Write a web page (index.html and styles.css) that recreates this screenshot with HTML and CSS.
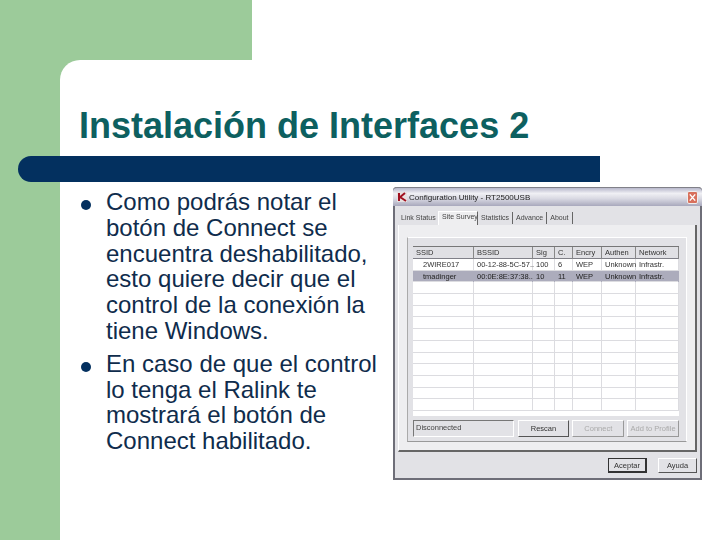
FILE: index.html
```html
<!DOCTYPE html>
<html lang="es">
<head>
<meta charset="utf-8">
<title>Instalación de Interfaces 2</title>
<link rel="stylesheet" href="styles.css">
</head>
<body>
<div class="slide">
  <div class="panel">
    <h1 class="title">Instalación de Interfaces 2</h1>
    <div class="bar"></div>
    <div class="content">
      <ul class="points">
        <li>Como podrás notar el botón de Connect se encuentra deshabilitado, esto quiere decir que el control de la conexión la tiene Windows.</li>
        <li>En caso de que el control lo tenga el Ralink te mostrará el botón de Connect habilitado.</li>
      </ul>
      <div class="dialog">
        <div class="titlebar">
          <svg class="appicon" viewBox="0 0 10 10"><rect width="10" height="10" fill="#e8e0e0"/><path d="M2 1v8M2 6l6-5M3 5l6 4" stroke="#a01020" stroke-width="2" fill="none"/></svg>
          <span class="apptitle">Configuration Utility - RT2500USB</span>
          <span class="close"><svg viewBox="0 0 10 12"><path d="M2 2.5l6 7M8 2.5l-6 7" stroke="#fff" stroke-width="1.6"/></svg></span>
        </div>
        <div class="tabs">
          <span class="tab first">Link Status</span>
          <span class="tab active">Site Survey</span>
          <span class="tab">Statistics</span>
          <span class="tab">Advance</span>
          <span class="tab">About</span>
        </div>
        <div class="tabpage">
          <div class="group">
            <div class="grid">
              <div class="row head"><span>SSID</span><span>BSSID</span><span>Sig</span><span>C.</span><span>Encry</span><span>Authen</span><span>Network</span></div>
              <div class="row"><span class="ind">2WIRE017</span><span>00-12-88-5C-57..</span><span>100</span><span>6</span><span>WEP</span><span>Unknown</span><span>Infrastr.</span></div>
              <div class="row sel"><span class="ind">tmadinger</span><span>00:0E:8E:37:38..</span><span>10</span><span>11</span><span>WEP</span><span>Unknown</span><span>Infrastr.</span></div>
              <div class="row"><span></span><span></span><span></span><span></span><span></span><span></span><span></span></div>
              <div class="row"><span></span><span></span><span></span><span></span><span></span><span></span><span></span></div>
              <div class="row"><span></span><span></span><span></span><span></span><span></span><span></span><span></span></div>
              <div class="row"><span></span><span></span><span></span><span></span><span></span><span></span><span></span></div>
              <div class="row"><span></span><span></span><span></span><span></span><span></span><span></span><span></span></div>
              <div class="row"><span></span><span></span><span></span><span></span><span></span><span></span><span></span></div>
              <div class="row"><span></span><span></span><span></span><span></span><span></span><span></span><span></span></div>
              <div class="row"><span></span><span></span><span></span><span></span><span></span><span></span><span></span></div>
              <div class="row"><span></span><span></span><span></span><span></span><span></span><span></span><span></span></div>
              <div class="row"><span></span><span></span><span></span><span></span><span></span><span></span><span></span></div>
              <div class="row tail"><span></span><span></span><span></span><span></span><span></span><span></span><span></span></div>
            </div>
            <div class="actions">
              <div class="status">Disconnected</div>
              <button class="btn">Rescan</button>
              <button class="btn off">Connect</button>
              <button class="btn off">Add to Profile</button>
            </div>
          </div>
        </div>
        <div class="footer">
          <button class="btn small primary">Aceptar</button>
          <button class="btn small">Ayuda</button>
        </div>
      </div>
    </div>
  </div>
</div>
</body>
</html>
```
FILE: styles.css
```css
* { box-sizing: border-box; }
html, body { margin: 0; padding: 0; }
.slide {
  width: 720px;
  height: 540px;
  overflow: hidden;
  padding: 60px 0 0 60px;
  background-color: #fff;
  background-image: linear-gradient(#9ccb9a, #9ccb9a), linear-gradient(#9ccb9a, #9ccb9a), linear-gradient(#9ccb9a, #9ccb9a);
  background-size: 60px 100%, 252px 60px, 90px 90px;
  background-repeat: no-repeat;
  font-family: "Liberation Sans", Arial, sans-serif;
}
.panel {
  height: 480px;
  background: #fff;
  border-top-left-radius: 20px;
  padding-top: 46px;
}
.title {
  margin: 0 0 0 19px;
  height: 50px;
  font-size: 36px;
  line-height: 40px;
  font-weight: 700;
  color: #0d6060;
}
.bar {
  width: 582px;
  height: 26px;
  margin-left: -42px;
  background: #03305f;
  border-radius: 13px 0 0 13px;
}
.content {
  display: flex;
  align-items: flex-start;
}
.points {
  list-style: none;
  margin: 7px 0 0;
  padding: 0 0 0 46px;
  width: 333px;
  flex: none;
  font-size: 24px;
  line-height: 25.8px;
  color: #0f2c4c;
}
.points li { position: relative; }
.points li + li { margin-top: 7px; }
.points li::before {
  content: "";
  position: absolute;
  left: -25px;
  top: 11px;
  width: 10px;
  height: 10px;
  border-radius: 50%;
  background: #03305f;
}
.dialog {
  width: 309px;
  height: 293px;
  margin-top: 5px;
  background: #e2e2e6;
  border: 2px solid #6e6e78;
  border-top: 0;
  border-radius: 4px 4px 0 0;
  font-size: 7.5px;
  color: #444;
  display: flex;
  flex-direction: column;
  filter: blur(0.4px);
}
.titlebar {
  height: 19px;
  flex: none;
  margin: 0 -2px;
  display: flex;
  align-items: center;
  gap: 2px;
  padding: 0 4px 0 4px;
  border-radius: 4px 4px 0 0;
  border-top: 1px solid #808088;
  background: linear-gradient(#b8b8cc, #f0f0f4 30%, #d8d8e2 60%, #a8a8bc);
}
.appicon { width: 10px; height: 10px; flex: none; }
.apptitle { font-size: 8px; color: #222; flex: 1; white-space: nowrap; }
.close {
  width: 11px;
  height: 13px;
  flex: none;
  background: #d8705c;
  border: 1px solid #eee;
  border-radius: 2px;
  display: flex;
}
.close svg { width: 100%; height: 100%; }
.tabs {
  height: 19px;
  flex: none;
  display: flex;
  align-items: flex-end;
  padding-left: 4px;
  font-size: 7px;
}
.tab {
  height: 12px;
  line-height: 11px;
  padding: 0 3px;
  border-right: 1px solid #666;
  white-space: nowrap;
  margin-bottom: 1px;
}
.tab.first { width: 39px; padding: 0 0 0 2px; border-right: 0; }
.tab.active {
  height: 14px;
  width: 40px;
  padding: 0 0 0 3px;
  margin-bottom: 0;
  line-height: 10px;
  background: #eeeef0;
  border-left: 1px solid #fff;
  border-top: 1px solid #fff;
}
.tabpage {
  height: 227px;
  flex: none;
  margin: 0 3px;
  padding: 12px 8px 0 8px;
  background: #eeeef0;
  border-right: 2px solid #666;
  border-bottom: 2px solid #666;
  border-left: 1px solid #fff;
}
.group {
  height: 205px;
  padding: 8px 7px 0 5px;
  background: #e2e2e6;
  border: 1px solid #fff;
  border-left-color: #aaa;
  border-bottom-color: #999;
}
.grid {
  height: 170px;
  background: #fff;
  overflow: hidden;
}
.row {
  display: grid;
  grid-template-columns: 61px 59px 22px 18px 29px 34px 1fr;
  height: 11.7px;
  line-height: 11px;
  border-bottom: 1px solid #dcdce0;
  white-space: nowrap;
  color: #333;
}
.row span {
  border-right: 1px solid #dcdce0;
  padding-left: 3px;
  height: 100%;
  min-width: 0;
}
.row .ind { padding-left: 10px; }
.row.head {
  height: 13px;
  line-height: 12px;
  background: #e0e0e4;
  border-bottom: 1px solid #808088;
  border-top: 1px solid #777;
}
.row.head span { border-right: 1px solid #888; }
.row.sel { background: #acacbc; color: #222; }
.row.sel span { border-right-color: #acacbc; }
.actions {
  display: flex;
  gap: 3px;
  margin-top: 4px;
}
.status {
  width: 101px;
  height: 17px;
  margin-right: 1px;
  padding-left: 2px;
  line-height: 13px;
  border: 1px solid #777;
  border-right-color: #fff;
  border-bottom-color: #fff;
}
.btn {
  width: 52px;
  height: 17px;
  padding: 0;
  font: inherit;
  color: #333;
  background: #e2e2e6;
  border: 1px solid #fff;
  border-right-color: #555;
  border-bottom-color: #555;
  white-space: nowrap;
}
.btn.off { color: #aaa; border-right-color: #999; border-bottom-color: #999; }
.footer {
  display: flex;
  justify-content: flex-end;
  gap: 11px;
  padding: 6px 3px 0 0;
}
.btn.small { width: 39px; height: 15px; }
.btn.primary { border: 1px solid #333; border-right-width: 2px; border-bottom-width: 2px; }
```
